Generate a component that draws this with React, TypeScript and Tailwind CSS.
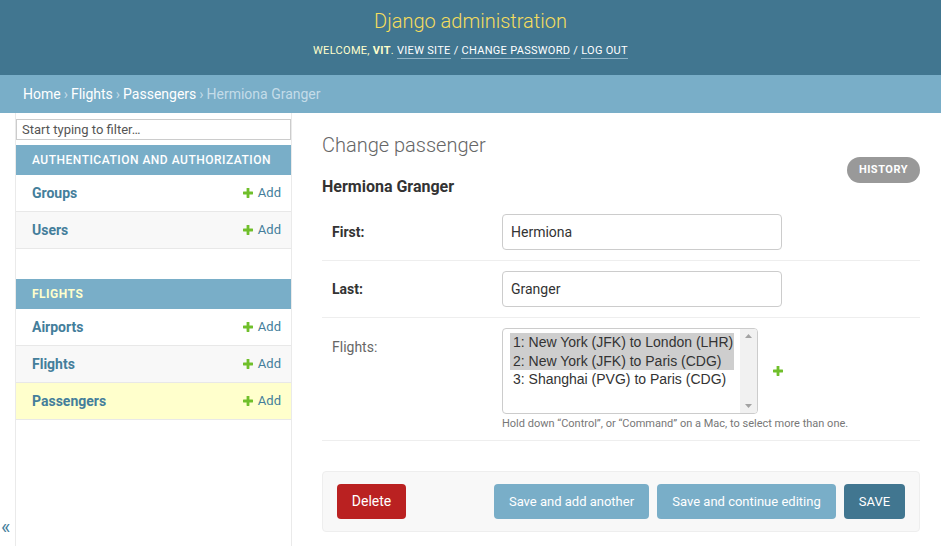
import React from "react";

const linkColor = "text-[#447e9b]";

function AddIcon({ className = "" }: { className?: string }) {
  return (
    <svg width="10" height="10" viewBox="0 0 10 10" className={className}>
      <rect x="3.6" y="0" width="2.8" height="10" rx="0.4" fill="#70bf2b" />
      <rect x="0" y="3.6" width="10" height="2.8" rx="0.4" fill="#70bf2b" />
    </svg>
  );
}

interface ModelRow {
  name: string;
  current?: boolean;
}

function AppModule({ title, models, current }: { title: string; models: ModelRow[]; current?: boolean }) {
  return (
    <div>
      <div
        className={`h-[30px] flex items-center pl-4 bg-[#79aec8] text-[12px] tracking-[0.5px] ${
          current ? "text-[#ffffcc] font-bold" : "text-white font-medium"
        }`}
      >
        {title}
      </div>
      {models.map((m, i) => (
        <div
          key={m.name}
          className={`h-[37px] flex items-center justify-between pl-4 pr-[10px] border-b border-[#e8e8e8] ${
            m.current ? "bg-[#ffffcc]" : i % 2 === 1 ? "bg-[#f8f8f8]" : "bg-white"
          }`}
        >
          <span className={`text-[14px] font-bold ${linkColor}`}>{m.name}</span>
          <span className={`flex items-center gap-[5px] text-[13px] ${linkColor}`}>
            <AddIcon />
            Add
          </span>
        </div>
      ))}
    </div>
  );
}

const flights = [
  { label: "1: New York (JFK) to London (LHR)", selected: true },
  { label: "2: New York (JFK) to Paris (CDG)", selected: true },
  { label: "3: Shanghai (PVG) to Paris (CDG)", selected: false },
];

export default function App() {
  return (
    <div className="h-screen overflow-hidden flex flex-col bg-white font-['Roboto',sans-serif] text-[#333]">
      {/* header */}
      <div className="h-[75px] shrink-0 bg-[#417690] flex flex-col items-center pt-[8px]">
        <div className="text-[20px] font-light text-[#f5dd5d] leading-[26px]">Django administration</div>
        <div className="mt-[9px] text-[11px] tracking-[0.3px] text-[#ffffcc] uppercase flex items-center gap-[3px]">
          <span>
            Welcome, <strong className="font-bold">Vit</strong>.
          </span>
          <span className="text-white border-b border-[#8fb3c6] leading-[15px]">View site</span>
          <span className="text-white">/</span>
          <span className="text-white border-b border-[#8fb3c6] leading-[15px]">Change password</span>
          <span className="text-white">/</span>
          <span className="text-white border-b border-[#8fb3c6] leading-[15px]">Log out</span>
        </div>
      </div>

      {/* breadcrumbs */}
      <div className="h-[38px] shrink-0 bg-[#79aec8] flex items-center px-[23px] text-[14px] text-white">
        <span>Home</span>
        <span className="mx-[3px] text-[#c4dce8]">›</span>
        <span>Flights</span>
        <span className="mx-[3px] text-[#c4dce8]">›</span>
        <span>Passengers</span>
        <span className="mx-[3px] text-[#c4dce8]">›</span>
        <span className="text-[#c4dce8]">Hermiona Granger</span>
      </div>

      <div className="flex flex-1 min-h-0">
        {/* sidebar toggle */}
        <div className="w-[16px] shrink-0 border-r border-[#eaeaea] flex items-end pb-[9px] pl-[1px] text-[20px] leading-none text-[#447e9b]">
          «
        </div>

        {/* nav sidebar */}
        <div className="w-[276px] shrink-0 border-r border-[#eaeaea] pt-[6px]">
          <input
            readOnly
            placeholder="Start typing to filter…"
            className="block w-full h-[21px] border border-[#ccc] px-[5px] text-[13px] text-[#333] placeholder:text-[#555] outline-none"
          />
          <div className="mt-[5px]">
            <AppModule
              title="AUTHENTICATION AND AUTHORIZATION"
              models={[{ name: "Groups" }, { name: "Users" }]}
            />
          </div>
          <div className="mt-[30px]">
            <AppModule
              title="FLIGHTS"
              current
              models={[{ name: "Airports" }, { name: "Flights" }, { name: "Passengers", current: true }]}
            />
          </div>
        </div>

        {/* main content */}
        <div className="flex-1 pl-[30px] pr-[21px] pt-[20px]">
          <h1 className="text-[20px] font-light text-[#666] leading-[24px]">Change passenger</h1>
          <div className="flex items-start justify-between">
            <h2 className="text-[16px] font-bold text-[#333] leading-[20px] mt-[20px]">Hermiona Granger</h2>
            <span className="h-[26px] px-[12px] rounded-full bg-[#999] text-white text-[11px] font-bold tracking-[0.5px] flex items-center">
              HISTORY
            </span>
          </div>

          <div className="mt-[7px]">
            {[
              { label: "First:", value: "Hermiona" },
              { label: "Last:", value: "Granger" },
            ].map((f) => (
              <div key={f.label} className="flex items-center py-[10px] px-[10px] border-b border-[#eee]">
                <label className="w-[170px] text-[14px] font-bold text-[#333]">{f.label}</label>
                <div className="w-[280px] h-[36px] border border-[#ccc] rounded-[4px] flex items-center px-[8px] text-[14px] text-[#333]">
                  {f.value}
                </div>
              </div>
            ))}

            <div className="flex items-start py-[10px] px-[10px] border-b border-[#eee]">
              <label className="w-[170px] text-[14px] text-[#666] mt-[9px]">Flights:</label>
              <div>
                <div className="flex items-center">
                  <div className="w-[256px] h-[86px] border border-[#ccc] rounded-[4px] flex overflow-hidden">
                    <div className="flex-1 pt-[4px] pl-[7px] pr-[6px] font-['Liberation_Sans',Arial,sans-serif] text-[14px] text-[#333]">
                      {flights.map((o) => (
                        <div
                          key={o.label}
                          className={`h-[18.5px] leading-[18.5px] pl-[3px] whitespace-nowrap ${o.selected ? "bg-[#cecece]" : ""}`}
                        >
                          {o.label}
                        </div>
                      ))}
                    </div>
                    <div className="w-[17px] bg-[#f1f1f1] flex flex-col items-center justify-between py-[5px]">
                      <svg width="7" height="4" viewBox="0 0 7 4">
                        <path d="M0 4 L3.5 0 L7 4 Z" fill="#a3a3a3" />
                      </svg>
                      <svg width="7" height="4" viewBox="0 0 7 4">
                        <path d="M0 0 L3.5 4 L7 0 Z" fill="#a3a3a3" />
                      </svg>
                    </div>
                  </div>
                  <AddIcon className="ml-[15px]" />
                </div>
                <div className="mt-[3px] text-[11px] leading-[13px] text-[#777]">
                  Hold down “Control”, or “Command” on a Mac, to select more than one.
                </div>
              </div>
            </div>
          </div>

          <div className="mt-[30px] h-[61px] bg-[#f8f8f8] border border-[#eee] rounded-[4px] flex items-center px-[14px]">
            <span className="w-[69px] h-[35px] rounded-[4px] bg-[#ba2121] text-white text-[14px] flex items-center justify-center">
              Delete
            </span>
            <div className="ml-auto flex gap-[8px]">
              <span className="w-[155px] h-[35px] rounded-[4px] bg-[#79aec8] text-white text-[13px] flex items-center justify-center">
                Save and add another
              </span>
              <span className="w-[179px] h-[35px] rounded-[4px] bg-[#79aec8] text-white text-[13px] flex items-center justify-center">
                Save and continue editing
              </span>
              <span className="w-[61px] h-[35px] rounded-[4px] bg-[#417690] text-white text-[13px] flex items-center justify-center">
                SAVE
              </span>
            </div>
          </div>
        </div>
      </div>
    </div>
  );
}
